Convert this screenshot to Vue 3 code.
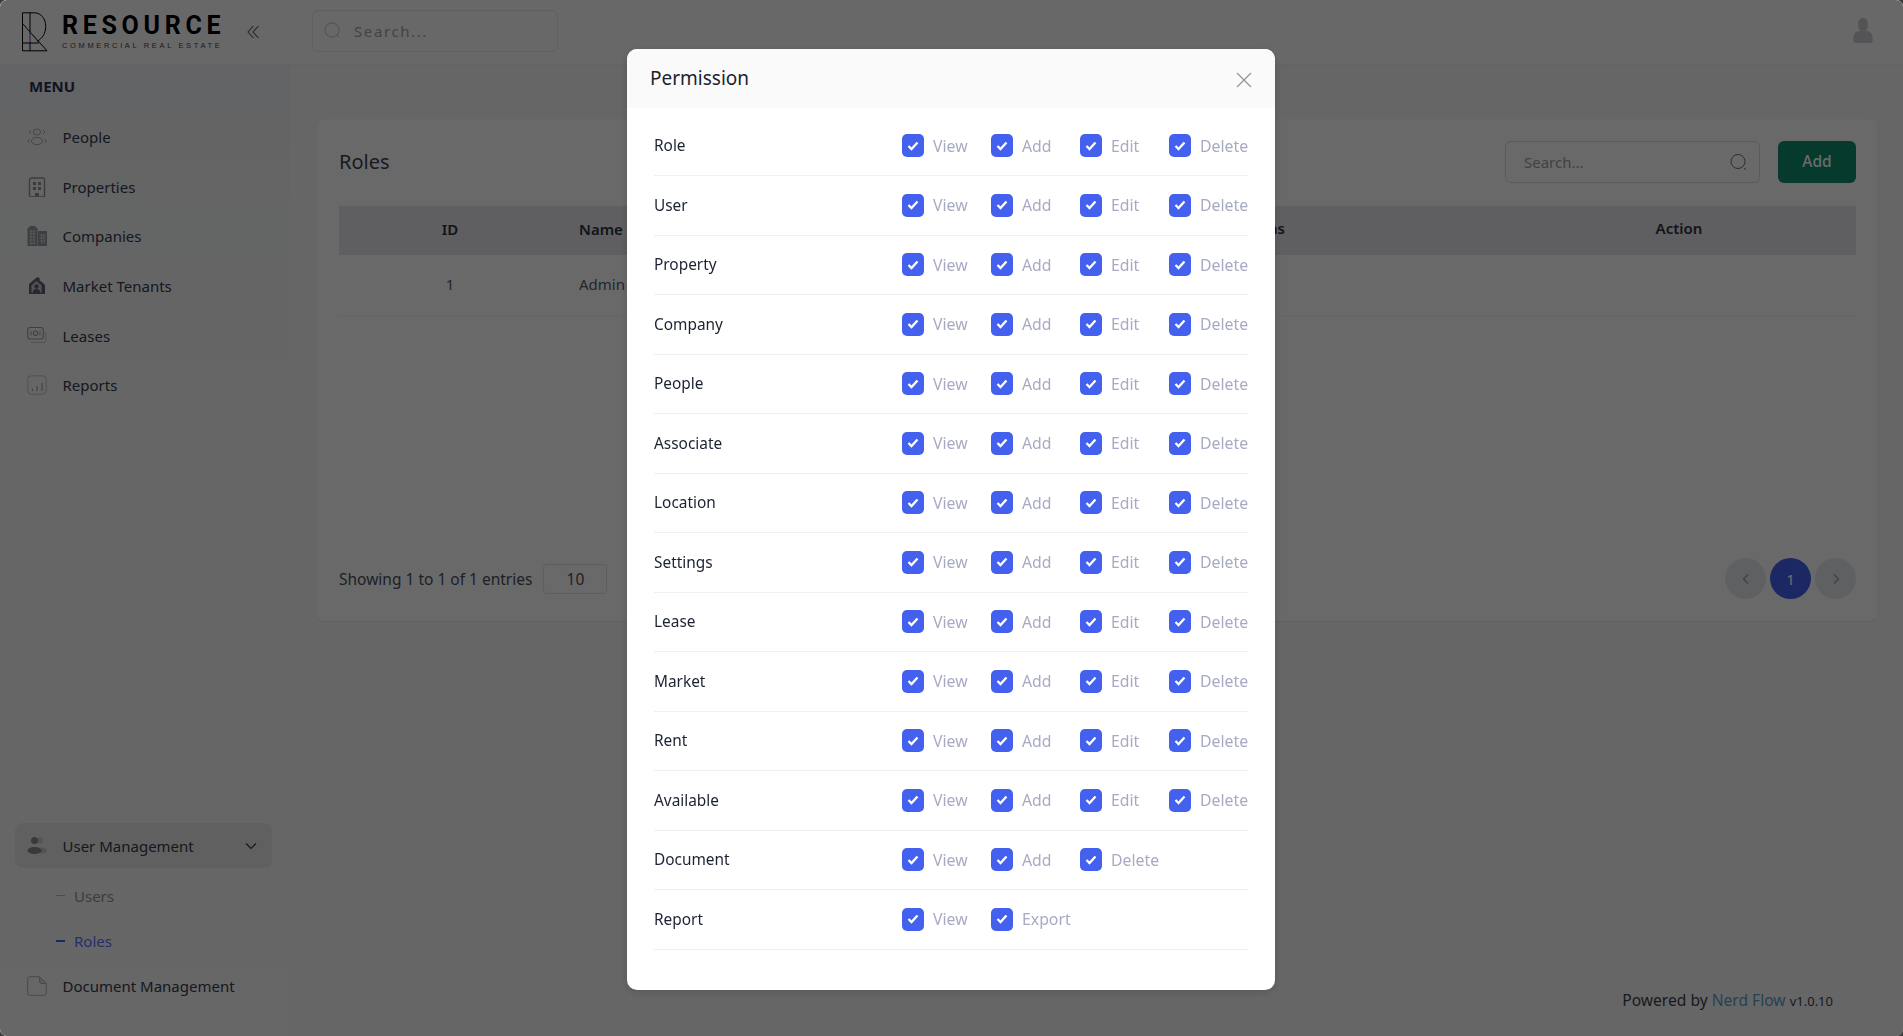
<script setup>
const menu = [
  { name: 'People', icon: 'people' },
  { name: 'Properties', icon: 'building' },
  { name: 'Companies', icon: 'companies' },
  { name: 'Market Tenants', icon: 'market' },
  { name: 'Leases', icon: 'lease' },
  { name: 'Reports', icon: 'report' }
]
const full = ['View', 'Add', 'Edit', 'Delete']
const permissions = [
  { name: 'Role', actions: full },
  { name: 'User', actions: full },
  { name: 'Property', actions: full },
  { name: 'Company', actions: full },
  { name: 'People', actions: full },
  { name: 'Associate', actions: full },
  { name: 'Location', actions: full },
  { name: 'Settings', actions: full },
  { name: 'Lease', actions: full },
  { name: 'Market', actions: full },
  { name: 'Rent', actions: full },
  { name: 'Available', actions: full },
  { name: 'Document', actions: ['View', 'Add', 'Delete'] },
  { name: 'Report', actions: ['View', 'Export'] }
]
</script>

<template>
  <div class="app">
    <aside class="sidebar">
      <div class="brand">
        <svg class="mark" viewBox="0 0 26 40" fill="none" stroke="#000" stroke-width="1">
          <path d="M.5 .8h12c6.500 0 11.200 6 11.200 13.700 0 7-3.500 12-8.700 15" />
          <path d="M.5 .8v38h24.500L.5 11.500" />
          <path d="M8 .8v21M8 30v8.500M.5 31H17" />
          <path d="M8 20l7.500 9" stroke="#2a7a7a" />
          <path d="M8 21v10" stroke="#8a3a9a" />
          <path d="M15 29.500 17 31" stroke="#a08a3a" />
        </svg>
        <div class="wordmark">
          <span class="word-main">RESOURCE</span>
          <span class="word-sub">COMMERCIAL REAL ESTATE</span>
        </div>
        <svg class="collapse" viewBox="0 0 12 14" fill="none" stroke="#555a66" stroke-width="1.100">
          <path d="M6.500 1 1 7l5.500 6M11.500 1 6 7l5.500 6" />
        </svg>
      </div>
      <div class="menu-title">MENU</div>
      <nav class="menu">
        <a v-for="item in menu" :key="item.name" class="menu-item">
          <svg class="ico" viewBox="0 0 20 20" fill="none" stroke="#a8a8a8" stroke-width="1">
            <template v-if="item.icon === 'people'">
              <ellipse cx="10" cy="5" rx="3.600" ry="3" />
              <ellipse cx="10" cy="14" rx="5.600" ry="3.600" />
              <path d="M4 3 2 5l2 2M16 3l2 2-2 2M2.500 12 .5 14l2 2M17.500 12l2 2-2 2" />
            </template>
            <template v-else-if="item.icon === 'building'">
              <rect x="2.500" y="1" width="15" height="19" rx="2" stroke-width="1.400" stroke="#8f8f94" />
              <path d="M6 5h3v3H6zM11 5h3v3h-3zM6 10h3v3H6zM11 10h3v3h-3zM8 20v-4h4v4z" fill="#8f8f94" stroke="none" />
            </template>
            <template v-else-if="item.icon === 'companies'">
              <path d="M.5 20V2l2-.5V0h6v1.500l2 .5v18zM11 20V5h9v15z" fill="#92969e" stroke="none" />
              <path d="M2.500 5h6M2.500 8h6M2.500 11h6M2.500 14h6M2.500 17h6M12.500 9h6M12.500 12h6M12.500 15h6" stroke="#dcdcdc" stroke-width=".8" />
              <path d="M4 4v15M7 4v15M14.500 8v10M17 8v10" stroke="#dcdcdc" stroke-width=".7" />
            </template>
            <template v-else-if="item.icon === 'market'">
              <path d="M9 2 2 8v10h16V9l-3-3-2.500-1.500L13 3l-2-2z" fill="#5e626e" stroke="none" />
              <path d="M9.500 5 4.500 9.500V17h10V9.500z" fill="#c8c8c8" stroke="none" />
              <circle cx="9.500" cy="10.500" r="2.200" fill="#5e626e" stroke="none" />
              <path d="M5.500 17c0-2.800 1.600-4 4-4s4 1.200 4 4z" fill="#5e626e" stroke="none" />
            </template>
            <template v-else-if="item.icon === 'lease'">
              <rect x=".7" y="1.500" width="15.600" height="11.500" rx="2.500" stroke="#9a9a9a" stroke-width="1.200" />
              <circle cx="8.500" cy="7.200" r="2.200" stroke="#9a9a9a" stroke-width="1.100" />
              <path d="M4 5v4.500M13 5v4.500" stroke="#9a9a9a" />
              <path d="M18.800 6v8a2.500 2.500 0 0 1-2.500 2.500H4" stroke="#c4c4c4" stroke-width="1.200" />
            </template>
            <template v-else>
              <rect x=".8" y=".8" width="18.400" height="18.400" rx="3.500" stroke="#c0c0c0" />
              <path d="M5.500 16v-2.500M10 16v-5M15 16V8" stroke="#a2a2a2" stroke-width="1.200" />
            </template>
          </svg>
          <span>{{ item.name }}</span>
        </a>
      </nav>
      <div class="menu-bottom">
        <a class="menu-item group">
          <svg class="ico" viewBox="0 0 20 20">
            <circle cx="13" cy="4.500" r="3" fill="#c6c6c6" />
            <ellipse cx="14" cy="14.500" rx="6" ry="3" fill="#c6c6c6" />
            <circle cx="7.500" cy="4.500" r="3.500" fill="#86888e" />
            <ellipse cx="7.500" cy="14.500" rx="7" ry="3.500" fill="#86888e" />
          </svg>
          <span>User Management</span>
          <svg class="chev" viewBox="0 0 12 8" fill="none" stroke="#333" stroke-width="1.100">
            <path d="M1 1.500 6 6.500l5-5" />
          </svg>
        </a>
        <a class="sub first"><i class="dash"></i>Users</a>
        <a class="sub active"><i class="dash"></i>Roles</a>
        <a class="menu-item doc">
          <svg class="ico" viewBox="0 0 20 20" fill="none" stroke="#aeaeae" stroke-width="1">
            <path d="M3 .7h9.500l6.800 6.800V17a2.300 2.300 0 0 1-2.300 2.300H3A2.300 2.300 0 0 1 .7 17V3A2.300 2.300 0 0 1 3 .7z" />
            <path d="M12.500 .7V5a2.500 2.500 0 0 0 2.500 2.500h4.300" fill="#aeaeae" fill-opacity=".4" />
          </svg>
          <span>Document Management</span>
        </a>
      </div>
    </aside>

    <div class="main">
      <header class="topbar">
        <div class="top-search">
          <svg viewBox="0 0 18 18" fill="none" stroke="#b8b8b8" stroke-width="1">
            <circle cx="8.500" cy="8.500" r="7.500" />
            <path d="m14 14 2 2" />
          </svg>
          <span>Search...</span>
        </div>
        <svg class="avatar" viewBox="0 0 22 28">
          <rect x="6" y="1" width="10" height="14" rx="5" fill="#c8c8cc" />
          <path d="M1 22c0-6 4-8 10-8s10 2 10 8v2a3 3 0 0 1-3 3H4a3 3 0 0 1-3-3z" fill="#c8c8cc" />
        </svg>
      </header>

      <main class="content">
        <section class="card">
          <div class="card-head">
            <h2>Roles</h2>
            <div class="tools">
              <div class="table-search">
                <span>Search...</span>
                <svg viewBox="0 0 18 18" fill="none" stroke="#6c6c6c" stroke-width="1">
                  <circle cx="8" cy="8.500" r="7" />
                  <path d="m14 15 2 2" />
                </svg>
              </div>
              <button class="add">Add</button>
            </div>
          </div>
          <div class="thead">
            <span class="c-id">ID</span>
            <span class="c-name">Name</span>
            <span class="c-perm">Permissions</span>
            <span class="c-act">Action</span>
          </div>
          <div class="tbody">
            <span class="c-id">1</span>
            <span class="c-name">Admin</span>
          </div>
          <div class="card-foot">
            <div class="showing">
              <span>Showing 1 to 1 of 1 entries</span>
              <span class="size">10</span>
            </div>
            <div class="pager">
              <span class="page">
                <svg viewBox="0 0 8 12" fill="none" stroke="#9a9a9a" stroke-width="1.300"><path d="M6 1.500 1.500 6 6 10.500" /></svg>
              </span>
              <span class="page current">1</span>
              <span class="page">
                <svg viewBox="0 0 8 12" fill="none" stroke="#9a9a9a" stroke-width="1.300"><path d="M2 1.500 6.500 6 2 10.500" /></svg>
              </span>
            </div>
          </div>
        </section>
        <footer class="foot">
          <span>Powered by <a>Nerd Flow</a> <small>v1.0.10</small></span>
        </footer>
      </main>
    </div>

    <div class="overlay">
      <div class="modal">
        <div class="modal-head">
          <h3>Permission</h3>
          <svg class="close" viewBox="0 0 16 16" fill="none" stroke="#8f929b" stroke-width="1.200">
            <path d="m1 1 14 14M15 1 1 15" />
          </svg>
        </div>
        <div class="modal-body">
          <div v-for="row in permissions" :key="row.name" class="perm-row">
            <span class="perm-name">{{ row.name }}</span>
            <label v-for="action in row.actions" :key="action" class="perm-check">
              <span class="box">
                <svg viewBox="0 0 12 10" fill="none" stroke="#fff" stroke-width="2.300">
                  <path d="M1.500 5 4.500 8l6-6.500" />
                </svg>
              </span>
              <span class="perm-label">{{ action }}</span>
            </label>
          </div>
        </div>
      </div>
    </div>
  </div>
</template>

<style>
html, body { margin: 0; background: #3a3a3a; }
</style>

<style scoped>
.app {
  display: flex;
  height: 1036px;
  overflow: hidden;
  border-radius: 7px;
  font-family: "Noto Sans", "Liberation Sans", sans-serif;
  font-size: 15px;
  color: #343a4e;
  background: #f3f3f3;
}
.sidebar {
  width: 290px;
  flex: none;
  display: flex;
  flex-direction: column;
  background: linear-gradient(180deg, #ebecef 0, #eeeff1 120px, #f2f2f3 400px, #f5f5f5 100%);
  box-sizing: border-box;
}
.brand {
  height: 64px;
  flex: none;
  background: #f8f8f8;
  display: flex;
  align-items: center;
  padding-left: 22px;
  box-sizing: border-box;
}
.mark { width: 26px; height: 40px; }
.wordmark {
  display: flex;
  flex-direction: column;
  margin-left: 14px;
  width: 172px;
}
.word-main {
  font-family: Roboto, "Liberation Sans", sans-serif;
  font-weight: 700;
  font-size: 25px;
  line-height: 24px;
  letter-spacing: 4.700px;
  color: #000;
}
.word-sub {
  font-family: "Liberation Sans", sans-serif;
  font-size: 7.500px;
  line-height: 9px;
  letter-spacing: 2.650px;
  color: #444;
  margin-top: 3px;
  white-space: nowrap;
}
.collapse { width: 12px; height: 14px; margin-left: 13px; }
.menu-title {
  height: 47px;
  line-height: 44px;
  padding-left: 29px;
  font-weight: 700;
  font-size: 15px;
  color: #263050;
  flex: none;
}
.menu {
  display: flex;
  flex-direction: column;
  padding-top: 1.500px;
}
.menu-item {
  display: flex;
  align-items: center;
  height: 49.600px;
  padding-left: 27px;
  box-sizing: border-box;
  gap: 15.500px;
}
.ico { width: 20px; height: 20px; flex: none; }
.menu-bottom {
  margin-top: auto;
  display: flex;
  flex-direction: column;
  padding-bottom: 28px;
}
.group {
  height: 45px;
  margin: 0 18px 0 15px;
  padding-left: 12px;
  background: #e4e4e4;
  border-radius: 8px;
}
.chev {
  width: 12px;
  height: 8px;
  margin-left: auto;
  margin-right: 15px;
}
.sub {
  display: flex;
  align-items: center;
  height: 45px;
  padding-left: 56px;
  color: #8e919c;
}
.first { margin-top: 5px; }
.dash {
  width: 9px;
  height: 1.500px;
  background: #b5b5b5;
  margin-right: 9px;
}
.sub.active { color: #5a70ff; }
.sub.active .dash { background: #4361ee; height: 2px; }
.doc { height: 45px; }
.main {
  flex: 1;
  min-width: 0;
  display: flex;
  flex-direction: column;
}
.topbar {
  height: 65px;
  flex: none;
  background: #f8f8f8;
  border-bottom: 1px solid #ededed;
  box-sizing: border-box;
  display: flex;
  align-items: center;
  justify-content: space-between;
  padding: 0 29px 3px 22px;
}
.top-search {
  width: 246px;
  height: 42px;
  border: 1px solid #e2e2e6;
  border-radius: 6px;
  box-sizing: border-box;
  display: flex;
  align-items: center;
  padding-left: 11px;
  gap: 13px;
  color: #a0a0a4;
  letter-spacing: 1.600px;
}
.top-search svg { width: 17px; height: 17px; }
.avatar { width: 22px; height: 27px; }
.content {
  flex: 1;
  display: flex;
  flex-direction: column;
  padding: 53px 25px 0 26px;
  min-height: 0;
}
.card {
  height: 504px;
  background: #fbfbfb;
  border: 1px solid #f0f0f0;
  border-bottom-color: #e4e4e4;
  border-radius: 8px;
  box-sizing: border-box;
  padding: 22px 21px 0 22px;
  display: flex;
  flex-direction: column;
  flex: none;
}
.card-head {
  display: flex;
  align-items: center;
  justify-content: space-between;
  height: 42px;
}
h2 { margin: -2px 0 0; font-size: 20px; font-weight: 400; color: #3a3f50; }
.tools { display: flex; gap: 18px; align-self: flex-start; }
.table-search {
  width: 255px;
  height: 42px;
  border: 1px solid #d8d8d8;
  border-radius: 6px;
  box-sizing: border-box;
  display: flex;
  align-items: center;
  justify-content: space-between;
  padding: 0 11px 0 18px;
  color: #9c9c9e;
}
.table-search svg { width: 18px; height: 18px; }
.add {
  width: 78px;
  height: 42px;
  border: 0;
  border-radius: 6px;
  background: #0e8a69;
  color: #fff;
  font: 500 15.500px "Noto Sans", sans-serif;
  padding: 0 0 2px;
}
.thead, .tbody {
  display: grid;
  grid-template-columns: 240px 1fr 1fr;
  position: relative;
  align-items: center;
}
.thead {
  margin-top: 23px;
  height: 49px;
  padding-bottom: 3px;
  box-sizing: border-box;
  background: #e2e3e7;
  font-weight: 600;
  color: #2c3040;
}
.tbody {
  height: 62px;
  padding-bottom: 3px;
  border-bottom: 1px solid #efefef;
  box-sizing: border-box;
  color: #555966;
}
.c-id { width: 222px; text-align: center; }
.c-name { grid-column: 2; }
.c-perm { position: absolute; left: 806px; top: 12px; width: 140px; text-align: right; }
.c-act { position: absolute; left: 1240px; top: 12px; width: 200px; text-align: center; }
.card-foot {
  margin-top: auto;
  display: flex;
  justify-content: space-between;
  align-items: center;
  padding-bottom: 22px;
}
.showing { display: flex; align-items: center; gap: 11px; font-size: 15.500px; color: #4a4e5c; }
.size {
  width: 64px;
  height: 30px;
  border: 1px solid #dfdfdf;
  border-radius: 4px;
  box-sizing: border-box;
  display: flex;
  align-items: center;
  justify-content: center;
}
.pager { display: flex; gap: 4px; }
.page {
  width: 41px;
  height: 41px;
  border-radius: 50%;
  background: #e3e4e8;
  display: flex;
  align-items: center;
  justify-content: center;
}
.page svg { width: 8px; height: 12px; }
.current { background: #4361ee; color: #fff; }
.foot {
  margin-top: auto;
  display: flex;
  justify-content: flex-end;
  padding: 0 45px 25px 0;
  font-size: 15.600px;
  color: #3a3f50;
}
.foot a { color: #5a9cc8; }
.foot small { font-size: 13px; }
.overlay {
  position: fixed;
  inset: 0;
  border-radius: 7px;
  background: rgba(0, 0, 0, 0.58);
  display: flex;
  justify-content: center;
  align-items: flex-start;
}
.modal {
  width: 648px;
  height: 941px;
  margin: 49px 0 0 -1px;
  background: #fff;
  border-radius: 10px;
  overflow: hidden;
  box-shadow: 0 2px 8px rgba(0, 0, 0, 0.15);
}
.modal-head {
  height: 59px;
  background: #fafafa;
  display: flex;
  align-items: center;
  justify-content: space-between;
  padding: 0 23px;
}
h3 { margin: -2px 0 0; font-size: 19px; font-weight: 400; color: #1c2232; }
.close { width: 16px; height: 16px; margin-top: 3px; }
.modal-body { padding: 8.500px 27px 0; }
.perm-row {
  height: 59.500px;
  border-bottom: 1px solid #f0f0f2;
  box-sizing: border-box;
  display: flex;
  align-items: center;
}
.perm-name { width: 248px; flex: none; font-size: 15.400px; color: #1c2232; }
.perm-check {
  display: flex;
  align-items: center;
  gap: 9px;
  flex: 0 0 89px;
}
.perm-check:last-child { flex-basis: auto; }
.box {
  width: 22px;
  height: 23px;
  border-radius: 5px;
  background: #4361ee;
  display: flex;
  align-items: center;
  justify-content: center;
}
.box svg { width: 12px; height: 10px; }
.perm-label { font-size: 15.800px; color: #a7aac2; }
</style>
